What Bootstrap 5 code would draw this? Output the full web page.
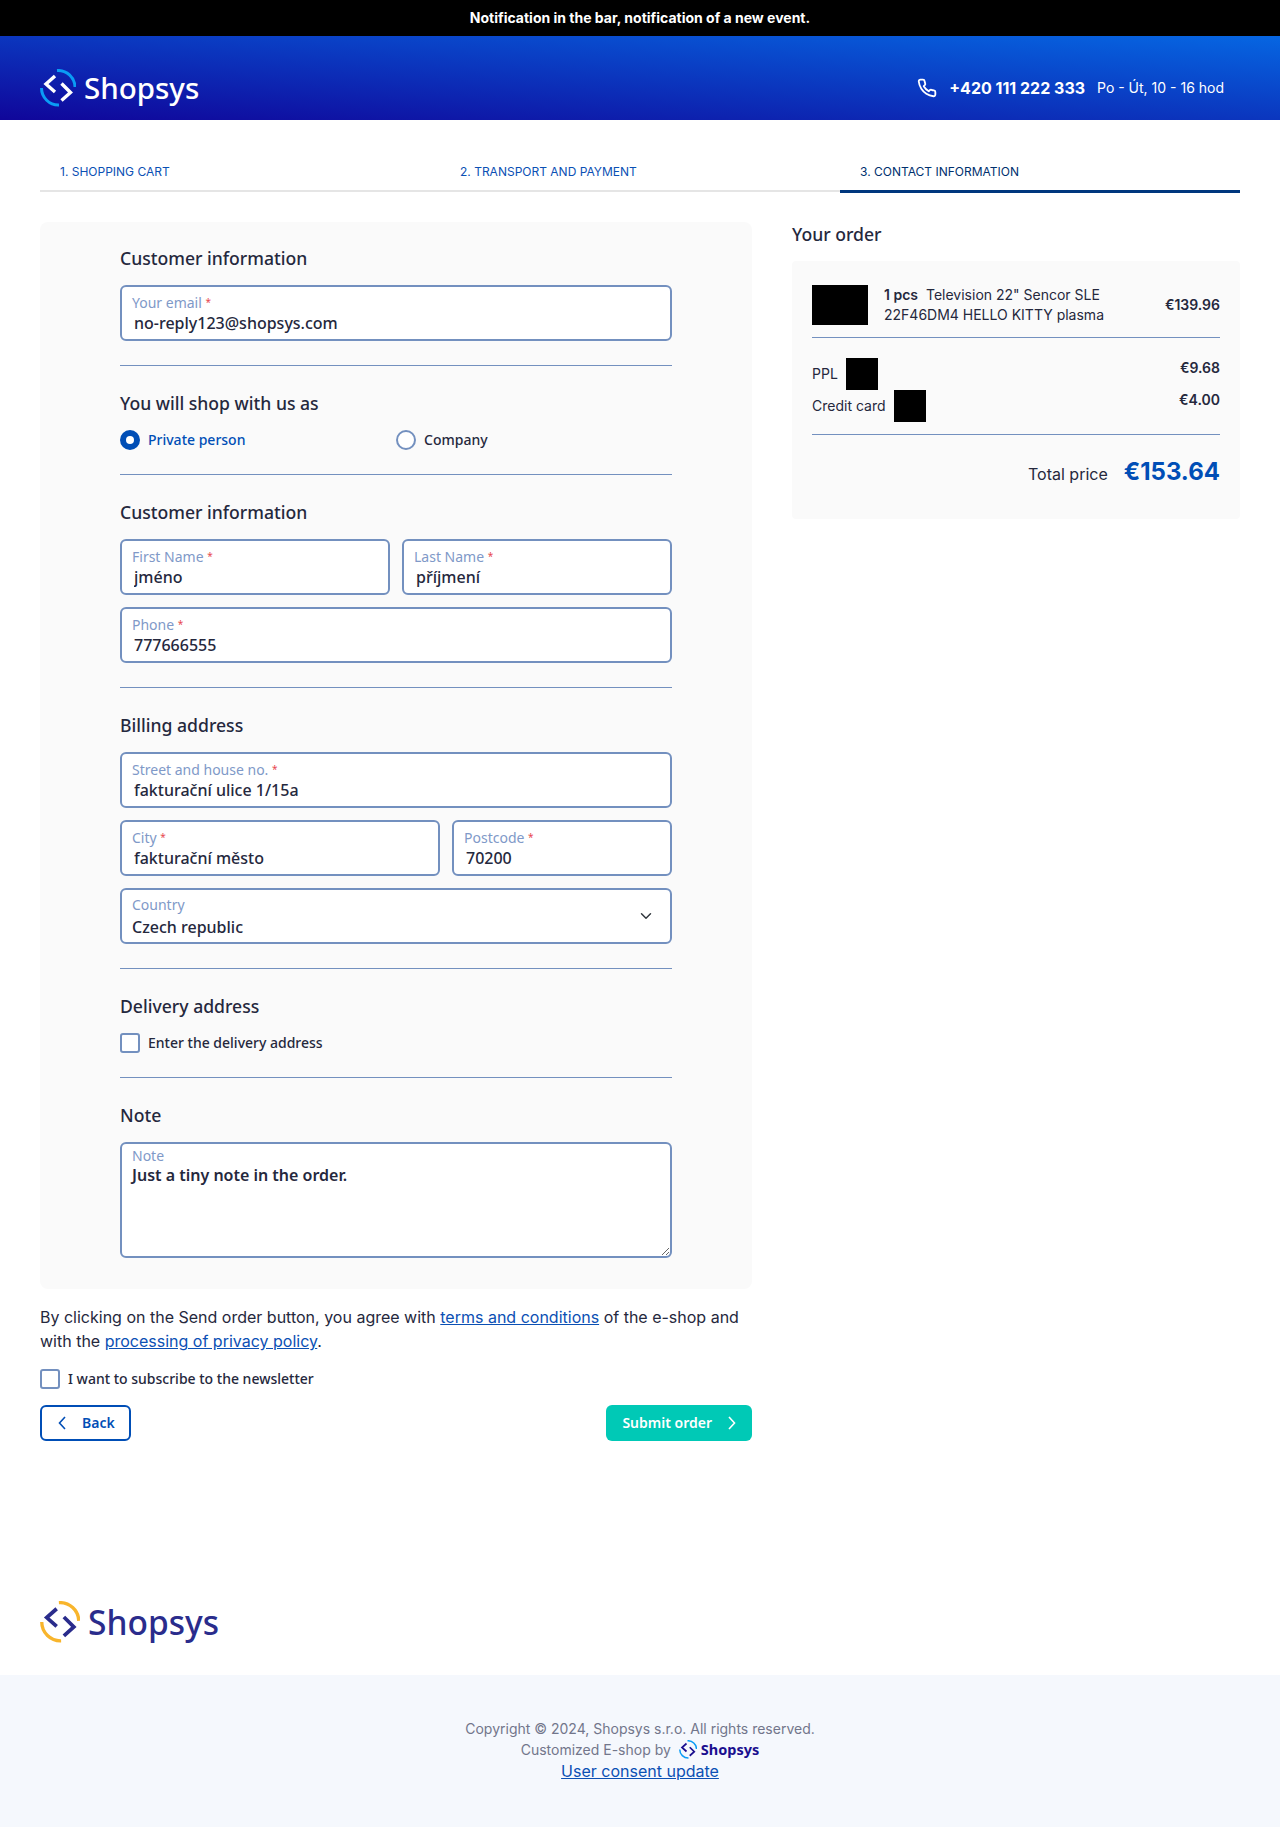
<!DOCTYPE html>
<html lang="en">
<head>
    <meta charset="UTF-8">
    <meta name="viewport" content="width=device-width, initial-scale=1.0">
    <title>Contact information</title>
    <link href="https://cdn.jsdelivr.net/npm/bootstrap@5.3.0/dist/css/bootstrap.min.css" rel="stylesheet">
    <style>
        body {
            font-family: Inter, "Liberation Sans", sans-serif;
            color: #25283d;
            font-size: 16px;
            line-height: 24px;
            min-height: 1827px;
            display: flex;
            flex-direction: column;
        }
        .notice-bar {
            background: #000;
            color: #fff;
            height: 36px;
            font-size: 14px;
            font-weight: 700;
            line-height: 36px;
        }
        .shop-header {
            height: 84px;
            padding: 20px 40px 0;
            background: linear-gradient(to top right, #10069a, #0666e2);
            color: #fff;
        }
        .logo-word {
            font-family: "Noto Sans", sans-serif;
            font-weight: 500;
            font-size: 29.5px;
            line-height: 40px;
        }
        .logo-mark { --arc: #0a9cf5; --chev: #fff; }
        .logo-dark { --arc: #f8b52c; --chev: #2a2c8c; }
        .logo-small { --arc: #0a9cf5; --chev: #1a0f8f; }
        .phone-num { font-weight: 700; font-size: 16px; margin-left: 12px; }
        .phone-hours { font-size: 14px; }
        .steps-nav { margin: 20px 40px 0; border-bottom: 2px solid #e5e5e5; height: 52px; }
        .step-link {
            display: block;
            width: 400px;
            height: 53px;
            padding: 20px 20px 0;
            font-size: 12px;
            line-height: 24px;
            color: #0b50b4;
            text-transform: uppercase;
            text-decoration: none;
        }
        .step-active { color: #00306e; border-bottom: 3px solid #00377e; }
        .page-main { padding: 30px 40px 0; gap: 40px; }
        .main-col { width: 712px; flex: none; }
        .side-col { width: 448px; flex: none; }
        .form-panel {
            background: #fafafa;
            border-radius: 8px;
            padding: 23px 80px 31px;
        }
        .sec-title {
            font-family: "Noto Sans", sans-serif;
            font-size: 17.6px;
            font-weight: 500;
            line-height: 27px;
            margin: 0 0 13px;
            color: #25283d;
        }
        .sec-line { border: 0; border-top: 1px solid #7390bf; opacity: 1; margin: 24px 0; }
        .checkout-form .form-floating > .form-control,
        .checkout-form .form-floating > .form-select {
            height: 56px;
            min-height: 0;
            border: 2px solid #7390bf;
            border-radius: 6px;
            padding: 24px 12px 4px;
            font-family: "Noto Sans", sans-serif;
            font-weight: 500;
            font-size: 16px;
            line-height: 24px;
            color: #25283d;
            background-color: #fff;
        }
        .checkout-form .form-floating > .form-select {
            padding: 25px 10px 3px;
            background-size: 16px 12px;
            background-position: right 16px center;
        }
        .checkout-form .form-floating > textarea.form-control {
            height: 116px;
            padding: 19px 10px 4px;
            font-weight: 600;
        }
        .checkout-form .form-floating > .form-control:not(:placeholder-shown) ~ label,
        .checkout-form .form-floating > .form-select ~ label {
            transform: none;
            opacity: 1;
            padding: 7px 12px 0;
            height: auto;
            font-family: "Noto Sans", sans-serif;
            font-size: 14px;
            line-height: 20px;
            color: #8099c8;
            border: 0;
        }
        .checkout-form .form-floating > textarea.form-control:not(:placeholder-shown) ~ label { padding-top: 4px; }
        .req { color: #e8484f; font-size: 10px; vertical-align: 2px; }
        .field-gap { gap: 12px; }
        .city-field { width: 320px; flex: none; }
        .choice-row { height: 20px; }
        .choice-half { width: 276px; }
        .form-check-input.pick {
            width: 20px;
            height: 20px;
            margin: 0;
            border: 2px solid #7390bf;
            background-color: #fff;
            flex: none;
        }
        .form-check-input.pick:checked { background-color: #004eb6; border-color: #004eb6; }
        .form-check-input.pick[type=checkbox] { border-radius: 3px; }
        .pick-label {
            font-family: "Noto Sans", sans-serif;
            font-size: 14px;
            font-weight: 500;
            line-height: 20px;
            margin-left: 8px;
        }
        .pick-on { color: #004eb6; }
        .terms-text { margin: 16px 0; }
        .terms-text a, .consent-link { color: #0b50b4; }
        .btn-row { margin-top: 16px; }
        .btn-back, .btn-send {
            font-family: "Noto Sans", sans-serif;
            font-size: 14px;
            font-weight: 600;
            height: 36px;
            border-radius: 6px;
            display: inline-flex;
            align-items: center;
            line-height: 20px;
        }
        .btn-back { border: 2px solid #004eb6; color: #004eb6; background: #fff; gap: 16px; padding: 0 14px 0 16px; }
        .btn-send { background: #00c9b6; color: #fff; border: 0; gap: 16px; padding: 0 16px; }
        .order-title {
            font-family: "Noto Sans", sans-serif;
            font-size: 17.6px;
            font-weight: 500;
            line-height: 27px;
            margin: -1px 0 13px;
        }
        .order-box {
            background: #fafafa;
            border-radius: 4px;
            padding: 24px 20px 0;
            height: 258px;
            font-size: 14px;
            line-height: 20px;
        }
        .thumb { background: #000; flex: none; }
        .thumb-wide { width: 56px; height: 40px; margin-right: 16px; }
        .thumb-sq { width: 32px; height: 32px; margin-left: 8px; }
        .product-name { width: 260px; }
        .order-line { border-top: 1px solid #7390bf; margin-top: 12px; }
        .price-val { font-weight: 600; }
        .total-row { margin-top: 22px; }
        .total-val { font-size: 24px; font-weight: 700; color: #004eb6; line-height: 30px; margin-left: 16px; }
        .foot-logo { margin: auto 0 31px; padding: 0 40px; }
        .logo-word-dark {
            font-family: "Noto Sans", sans-serif;
            font-size: 33.5px;
            font-weight: 500;
            line-height: 44px;
            color: #2a2c8c;
        }
        .shop-footer {
            background: #f5f8fd;
            height: 152px;
            padding-top: 43px;
            font-size: 14px;
            line-height: 21px;
            color: #72768b;
        }
        .logo-word-small { font-family: "Noto Sans", sans-serif; font-weight: 700; font-size: 14.5px; color: #1a0f8f; }
        .consent-link { font-size: 16px; display: inline-block; margin-top: 1px; }
    </style>
</head>
<body>
    <svg width="0" height="0" class="position-absolute">
        <symbol id="shop-logo" viewBox="0 0 36 38">
            <path d="M17 1.5A17 17 0 0 1 35 18" fill="none" stroke="var(--arc)" stroke-width="3"/>
            <path d="M1.5 19A17 17 0 0 0 19 36" fill="none" stroke="var(--arc)" stroke-width="3"/>
            <path d="M15 7 6 15l9 8" fill="none" stroke="var(--chev)" stroke-width="3.4"/>
            <path d="M21.5 14.5 30.5 23.5l-9 8" fill="none" stroke="var(--chev)" stroke-width="3.4"/>
        </symbol>
    </svg>

    <div class="notice-bar text-center">Notification in the bar, notification of a new event.</div>

    <header class="shop-header d-flex align-items-center justify-content-between">
        <a class="d-flex align-items-center gap-2 text-white text-decoration-none" href="#">
            <svg class="logo-mark" width="36" height="38"><use href="#shop-logo"/></svg>
            <span class="logo-word">Shopsys</span>
        </a>
        <div class="d-flex align-items-center">
            <svg width="20" height="20" viewBox="0 0 24 24" fill="none" stroke="#fff" stroke-width="2.2" stroke-linejoin="round"><path d="M22 16.92v3a2 2 0 0 1-2.18 2 19.79 19.79 0 0 1-8.63-3.07 19.5 19.5 0 0 1-6-6 19.79 19.79 0 0 1-3.07-8.67A2 2 0 0 1 4.11 2h3a2 2 0 0 1 2 1.72 12.84 12.84 0 0 0 .7 2.81 2 2 0 0 1-.45 2.11L8.09 9.91a16 16 0 0 0 6 6l1.27-1.27a2 2 0 0 1 2.11-.45 12.84 12.84 0 0 0 2.81.7A2 2 0 0 1 22 16.92z"/></svg>
            <span class="phone-num">+420 111 222 333</span>
            <span class="phone-hours ms-2 ps-1 me-3">Po - Út, 10 - 16 hod</span>
        </div>
    </header>

    <nav class="steps-nav d-flex">
        <a class="step-link" href="#">1. Shopping cart</a>
        <a class="step-link" href="#">2. Transport and payment</a>
        <a class="step-link step-active" href="#">3. Contact information</a>
    </nav>

    <main class="page-main d-flex align-items-start">
        <div class="main-col">
            <form class="form-panel checkout-form">
                <h2 class="sec-title">Customer information</h2>
                <div class="form-floating">
                    <input type="email" class="form-control" id="email" value="no-reply123@shopsys.com">
                    <label for="email">Your email <span class="req">*</span></label>
                </div>
                <hr class="sec-line">

                <h2 class="sec-title">You will shop with us as</h2>
                <div class="d-flex choice-row">
                    <div class="choice-half d-flex align-items-center">
                        <input class="form-check-input pick" type="radio" name="who" id="who1" checked>
                        <label class="pick-label pick-on" for="who1">Private person</label>
                    </div>
                    <div class="choice-half d-flex align-items-center">
                        <input class="form-check-input pick" type="radio" name="who" id="who2">
                        <label class="pick-label" for="who2">Company</label>
                    </div>
                </div>
                <hr class="sec-line">

                <h2 class="sec-title">Customer information</h2>
                <div class="d-flex flex-column field-gap">
                    <div class="d-flex field-gap">
                        <div class="form-floating flex-fill w-50">
                            <input class="form-control" id="first" value="jméno">
                            <label for="first">First Name <span class="req">*</span></label>
                        </div>
                        <div class="form-floating flex-fill w-50">
                            <input class="form-control" id="last" value="příjmení">
                            <label for="last">Last Name <span class="req">*</span></label>
                        </div>
                    </div>
                    <div class="form-floating">
                        <input class="form-control" id="phone" value="777666555">
                        <label for="phone">Phone <span class="req">*</span></label>
                    </div>
                </div>
                <hr class="sec-line">

                <h2 class="sec-title">Billing address</h2>
                <div class="d-flex flex-column field-gap">
                    <div class="form-floating">
                        <input class="form-control" id="street" value="fakturační ulice 1/15a">
                        <label for="street">Street and house no. <span class="req">*</span></label>
                    </div>
                    <div class="d-flex field-gap">
                        <div class="form-floating city-field">
                            <input class="form-control" id="city" value="fakturační město">
                            <label for="city">City <span class="req">*</span></label>
                        </div>
                        <div class="form-floating flex-fill">
                            <input class="form-control" id="zip" value="70200">
                            <label for="zip">Postcode <span class="req">*</span></label>
                        </div>
                    </div>
                    <div class="form-floating">
                        <select class="form-select" id="country"><option>Czech republic</option></select>
                        <label for="country">Country</label>
                    </div>
                </div>
                <hr class="sec-line">

                <h2 class="sec-title">Delivery address</h2>
                <div class="d-flex align-items-center choice-row">
                    <input class="form-check-input pick" type="checkbox" id="deliv">
                    <label class="pick-label" for="deliv">Enter the delivery address</label>
                </div>
                <hr class="sec-line">

                <h2 class="sec-title">Note</h2>
                <div class="form-floating">
                    <textarea class="form-control" id="note">Just a tiny note in the order.</textarea>
                    <label for="note">Note</label>
                </div>
            </form>

            <p class="terms-text">By clicking on the Send order button, you agree with <a href="#">terms and conditions</a> of the e-shop and with the <a href="#">processing of privacy policy</a>.</p>

            <div class="d-flex align-items-center choice-row">
                <input class="form-check-input pick" type="checkbox" id="news">
                <label class="pick-label" for="news">I want to subscribe to the newsletter</label>
            </div>

            <div class="btn-row d-flex justify-content-between">
                <a class="btn btn-back" href="#">
                    <svg width="8" height="14" viewBox="0 0 8 14" fill="none" stroke="#004eb6" stroke-width="1.6"><path d="M7 1 1.5 7 7 13"/></svg>
                    Back
                </a>
                <a class="btn btn-send" href="#">
                    Submit order
                    <svg width="8" height="14" viewBox="0 0 8 14" fill="none" stroke="#fff" stroke-width="1.6"><path d="M1 1l5.5 6L1 13"/></svg>
                </a>
            </div>
        </div>

        <aside class="side-col">
            <h2 class="order-title">Your order</h2>
            <div class="order-box">
                <div class="d-flex align-items-center justify-content-between">
                    <div class="d-flex align-items-center">
                        <div class="thumb thumb-wide"></div>
                        <div class="product-name"><strong class="fw-semibold me-1">1 pcs</strong> Television 22" Sencor SLE 22F46DM4 HELLO KITTY plasma</div>
                    </div>
                    <div class="price-val">€139.96</div>
                </div>
                <div class="order-line"></div>
                <div class="mt-3 pt-1">
                    <div class="d-flex justify-content-between">
                        <div class="d-flex align-items-center"><span>PPL</span><div class="thumb thumb-sq"></div></div>
                        <div class="price-val">€9.68</div>
                    </div>
                    <div class="d-flex justify-content-between">
                        <div class="d-flex align-items-center"><span>Credit card</span><div class="thumb thumb-sq"></div></div>
                        <div class="price-val">€4.00</div>
                    </div>
                </div>
                <div class="order-line"></div>
                <div class="total-row d-flex justify-content-end align-items-baseline">
                    <span class="fs-6">Total price</span>
                    <span class="total-val">€153.64</span>
                </div>
            </div>
        </aside>
    </main>

    <div class="foot-logo d-flex align-items-center">
        <svg class="logo-dark me-2" width="40" height="42"><use href="#shop-logo"/></svg>
        <span class="logo-word-dark">Shopsys</span>
    </div>

    <footer class="shop-footer text-center">
        <div>Copyright © 2024, Shopsys s.r.o. All rights reserved.</div>
        <div class="d-flex justify-content-center align-items-center">
            <span>Customized E-shop by</span>
            <svg class="logo-small ms-2 me-1" width="18" height="19"><use href="#shop-logo"/></svg>
            <span class="logo-word-small">Shopsys</span>
        </div>
        <a class="consent-link" href="#">User consent update</a>
    </footer>

    <script src="https://cdn.jsdelivr.net/npm/bootstrap@5.3.0/dist/js/bootstrap.bundle.min.js"></script>
</body>
</html>
